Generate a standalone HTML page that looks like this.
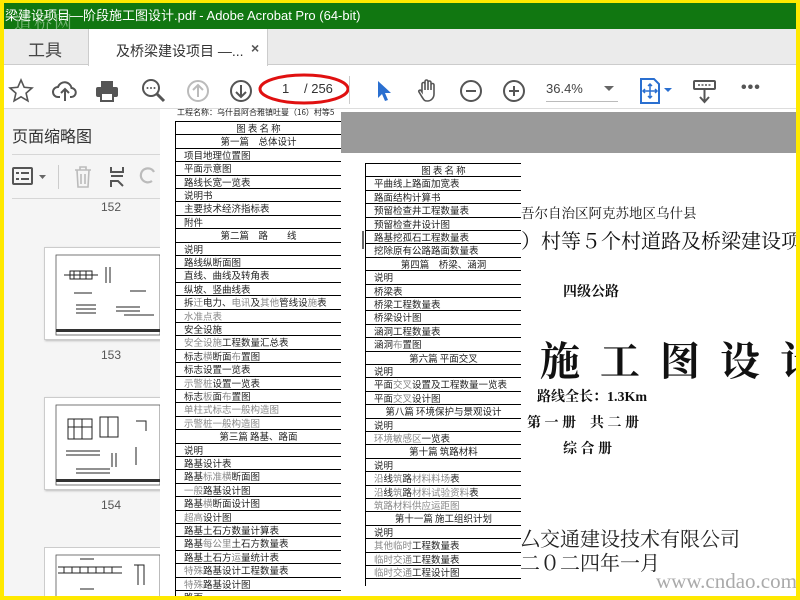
<!DOCTYPE html>
<html><head><meta charset="utf-8"><style>
*{margin:0;padding:0;box-sizing:border-box}
body{width:800px;height:600px;overflow:hidden;background:#ffe900;position:relative;font-family:"Liberation Sans","Noto Sans CJK SC",sans-serif}
.a{position:absolute}
.cj{font-family:"Liberation Serif","Noto Serif CJK SC",serif}
.row{position:absolute;left:0;right:0;height:13.4px;border-top:1px solid #000;font-size:9.5px;line-height:13px;padding-left:8px;color:#222;white-space:nowrap;font-family:"Noto Sans CJK SC",sans-serif}
.row.c{text-align:center;padding-left:0}
.g{color:#888}
svg{position:absolute}
</style></head><body>
<div class="a" style="left:4px;top:3px;width:792px;height:593px;background:#fff;overflow:hidden">
<div class="a" style="left:0;top:0;width:792px;height:26px;background:#117711;color:#fff;font-size:13px;line-height:26px;padding-left:1px;white-space:nowrap">梁建设项目—阶段施工图设计.pdf - Adobe Acrobat Pro (64-bit)</div>
<div class="a cj" style="left:10px;top:6px;font-size:18px;color:rgba(200,230,200,.55);letter-spacing:2px">道桥网</div>
<div class="a" style="left:0;top:26px;width:792px;height:36px;background:#ebebeb;border-bottom:1px solid #ccc"></div>
<div class="a" style="left:24px;top:33px;font-size:17px;color:#444">工具</div>
<div class="a" style="left:84px;top:26px;width:180px;height:37px;background:#fff;border-left:1px solid #ccc;border-right:1px solid #ccc"></div>
<div class="a" style="left:112px;top:38px;font-size:14px;color:#333">及桥梁建设项目 —...</div>
<div class="a" style="left:247px;top:37px;font-size:14px;color:#555;font-weight:bold">×</div>
<div class="a" style="left:0;top:63px;width:792px;height:42px;background:#fff"></div>
<svg style="left:4px;top:75px" width="26" height="26" viewBox="0 0 26 26"><path d="M13 2l3.2 7.3 7.8.7-5.9 5.2 1.8 7.7L13 18.8 6.1 22.9l1.8-7.7L2 10l7.8-.7z" fill="none" stroke="#555" stroke-width="1.6"/></svg>
<svg style="left:48px;top:75px" width="26" height="26" viewBox="0 0 26 26"><path d="M8 19H6a5 5 0 0 1 0-10 7 7 0 0 1 13.5 1A4.5 4.5 0 0 1 19 19h-1M13 23V11M9 15l4-4 4 4" fill="none" stroke="#555" stroke-width="2"/></svg>
<svg style="left:91px;top:76px" width="24" height="24" viewBox="0 0 24 24"><rect x="6" y="2" width="12" height="6" fill="#555"/><rect x="1" y="8" width="22" height="10" rx="2" fill="#555"/><rect x="6" y="14" width="12" height="8" fill="#fff" stroke="#555" stroke-width="2"/></svg>
<svg style="left:137px;top:75px" width="26" height="26" viewBox="0 0 26 26"><circle cx="10" cy="10" r="8" fill="none" stroke="#555" stroke-width="2"/><path d="M16 16l7 7" stroke="#555" stroke-width="3"/><circle cx="6.5" cy="10" r="1" fill="#555"/><circle cx="10" cy="10" r="1" fill="#555"/><circle cx="13.5" cy="10" r="1" fill="#555"/></svg>
<svg style="left:182px;top:76px" width="24" height="24" viewBox="0 0 24 24"><circle cx="12" cy="12" r="10" fill="none" stroke="#bbb" stroke-width="2"/><path d="M12 18V6M7 11l5-5 5 5" fill="none" stroke="#bbb" stroke-width="2"/></svg>
<svg style="left:225px;top:76px" width="24" height="24" viewBox="0 0 24 24"><circle cx="12" cy="12" r="10" fill="none" stroke="#555" stroke-width="2"/><path d="M12 6v12M7 13l5 5 5-5" fill="none" stroke="#555" stroke-width="2"/></svg>
<svg style="left:252px;top:68px" width="96" height="36" viewBox="0 0 96 36"><ellipse cx="48" cy="18" rx="44" ry="14" fill="none" stroke="#e01010" stroke-width="3"/></svg>
<div class="a" style="left:278px;top:78px;font-size:13px;color:#333">1</div>
<div class="a" style="left:300px;top:78px;font-size:13px;color:#333">/ 256</div>
<div class="a" style="left:345px;top:73px;width:1px;height:28px;background:#ccc"></div>
<svg style="left:372px;top:77px" width="16" height="22" viewBox="0 0 16 22"><path d="M2 1v17l4-4 3 7 3-1-3-7h6z" fill="#2a6fd0"/></svg>
<svg style="left:411px;top:75px" width="26" height="26" viewBox="0 0 26 26"><path d="M7 14V6a1.5 1.5 0 0 1 3 0v6V3.5a1.5 1.5 0 0 1 3 0V12V4.5a1.5 1.5 0 0 1 3 0V12V7a1.5 1.5 0 0 1 3 0v9c0 4-3 7-6.5 7S9 22 7 19l-3-5c-.8-1.4 1.2-2.6 2.2-1.2z" fill="none" stroke="#555" stroke-width="1.6"/></svg>
<svg style="left:455px;top:76px" width="24" height="24" viewBox="0 0 24 24"><circle cx="12" cy="12" r="10" fill="none" stroke="#555" stroke-width="2"/><path d="M7 12h10" stroke="#555" stroke-width="2"/></svg>
<svg style="left:498px;top:76px" width="24" height="24" viewBox="0 0 24 24"><circle cx="12" cy="12" r="10" fill="none" stroke="#555" stroke-width="2"/><path d="M7 12h10M12 7v10" stroke="#555" stroke-width="2"/></svg>
<div class="a" style="left:542px;top:78px;font-size:13px;color:#444">36.4%</div>
<div class="a" style="left:600px;top:83px;border:5px solid transparent;border-top:5px solid #666;border-bottom:0"></div>
<div class="a" style="left:542px;top:98px;width:72px;height:1px;background:#bbb"></div>
<svg style="left:635px;top:75px" width="36" height="26" viewBox="0 0 36 26"><path d="M2 1h13l5 5v19H2z" fill="none" stroke="#2a6fd0" stroke-width="2"/><path d="M11 6v14M4 13h14M9 8l2-2 2 2M9 18l2 2 2-2M6 11l-2 2 2 2M16 11l2 2-2 2" fill="none" stroke="#2a6fd0" stroke-width="1.5"/><path d="M25 10h8l-4 4z" fill="#2a6fd0"/></svg>
<svg style="left:688px;top:76px" width="26" height="26" viewBox="0 0 26 26"><rect x="2" y="2" width="21" height="8" rx="1" fill="none" stroke="#555" stroke-width="2"/><path d="M6 6h13" stroke="#555" stroke-dasharray="2 1.5" stroke-width="1.5"/><path d="M12.5 11v12M8 18l4.5 5 4.5-5" fill="none" stroke="#555" stroke-width="2"/></svg>
<div class="a" style="left:737px;top:76px;font-size:16px;color:#555;letter-spacing:1px;font-weight:bold">•••</div>
<div class="a" style="left:0;top:105px;width:792px;height:1px;background:#ddd"></div>

<div class="a" style="left:0;top:106px;width:156px;height:487px;background:#f5f5f5"></div>
<div class="a" style="left:8px;top:120px;font-size:16px;color:#333">页面缩略图</div>
<div class="a" style="left:8px;top:151px;width:148px;height:1px;background:#d6d6d6"></div>
<svg style="left:8px;top:163px" width="40" height="22" viewBox="0 0 40 22"><rect x="1" y="2" width="19" height="16" rx="1" fill="none" stroke="#555" stroke-width="2"/><path d="M4 7h3M9 7h8M4 13h3M9 13h8" stroke="#555" stroke-width="2"/><path d="M27 9h7l-3.5 4z" fill="#666"/></svg>
<div class="a" style="left:54px;top:162px;width:1px;height:24px;background:#ccc"></div>
<svg style="left:68px;top:162px" width="92" height="24" viewBox="0 0 92 24"><path d="M3 5h16M8 5V2h6v3M5 5l1 17h10l1-17M9 9v10M13 9v10" fill="none" stroke="#bbb" stroke-width="1.6"/><path d="M39 2v5h12V2M39 22v-6h7l5 5M39 11h12" fill="none" stroke="#555" stroke-width="2"/><path d="M80 16a7 7 0 1 1 2-9" fill="none" stroke="#bbb" stroke-width="2.2"/></svg>
<div class="a" style="left:8px;top:195px;width:148px;height:1px;background:#d6d6d6"></div>
<div class="a" style="left:97px;top:197px;font-size:12px;color:#555">152</div>
<div class="a" style="left:40px;top:244px;width:120px;height:93px;background:#fff;border:1px solid #ccc;box-shadow:1px 1px 2px #bbb"></div>
<svg style="left:50px;top:250px" width="106" height="84"><rect x="2" y="2" width="104" height="80" fill="none" stroke="#555" stroke-width=".8"/><g fill="none" stroke="#222" stroke-width="1"><rect x="16" y="18" width="22" height="8"/><path d="M20 18v8M26 18v8M32 18v8M10 22h34M52 14v16M56 14v16M20 40h18M22 52h20M22 56h20M22 60h20M62 54h24M62 58h24M76 38h16M70 62h30"/></g><rect x="2" y="76" width="104" height="3" fill="#333"/></svg>
<div class="a" style="left:97px;top:345px;font-size:12px;color:#555">153</div>
<div class="a" style="left:40px;top:394px;width:120px;height:93px;background:#fff;border:1px solid #ccc;box-shadow:1px 1px 2px #bbb"></div>
<svg style="left:50px;top:400px" width="106" height="84"><rect x="2" y="2" width="104" height="80" fill="none" stroke="#555" stroke-width=".8"/><g fill="none" stroke="#222" stroke-width="1"><rect x="14" y="16" width="24" height="20"/><path d="M20 16v20M28 16v20M14 24h24"/><rect x="46" y="14" width="18" height="20"/><path d="M54 14v20M82 18h10v10M12 48h34M12 52h34M58 50v14M62 50v14M22 66h34M22 70h34M82 44v18"/></g><rect x="2" y="76" width="104" height="3" fill="#333"/></svg>
<div class="a" style="left:97px;top:495px;font-size:12px;color:#555">154</div>
<div class="a" style="left:40px;top:544px;width:120px;height:60px;background:#fff;border:1px solid #ccc"></div>
<svg style="left:50px;top:550px" width="106" height="45"><rect x="2" y="2" width="104" height="50" fill="none" stroke="#555" stroke-width=".8"/><g fill="none" stroke="#222" stroke-width="1"><path d="M4 14h64M4 20h64M10 14v6M18 14v6M26 14v6M34 14v6M42 14v6M50 14v6M58 14v6M80 12h10v20M84 12v20M26 6h14M26 36h14"/></g></svg>

<div class="a" style="left:156px;top:106px;width:636px;height:487px;background:#fff"></div>
<div class="a" style="left:337px;top:109px;width:455px;height:41px;background:#9a9a9a"></div>
<div class="a" style="left:173px;top:104px;font-size:8px;color:#222;font-family:'Noto Sans CJK SC',sans-serif;white-space:nowrap;width:164px;overflow:hidden">工程名称：乌什县阿合雅镇吐曼（16）村等5</div>
<div class="a" style="left:171px;top:118px;width:166px;height:480px;border-left:1px solid #000;overflow:hidden">
<div class="row c" style="top:0">图 表 名 称</div>
<div class="row c" style="top:13.4px">第一篇　总体设计</div>
<div class="row" style="top:26.8px">项目地理位置图</div>
<div class="row" style="top:40.2px">平面示意图</div>
<div class="row" style="top:53.6px">路线长宽一览表</div>
<div class="row" style="top:67px">说明书</div>
<div class="row" style="top:80.4px">主要技术经济指标表</div>
<div class="row" style="top:93.8px">附件</div>
<div class="row c" style="top:107.2px">第二篇　路　　线</div>
<div class="row" style="top:120.6px">说明</div>
<div class="row" style="top:134px">路线纵断面图</div>
<div class="row" style="top:147.4px">直线、曲线及转角表</div>
<div class="row" style="top:160.8px">纵坡、竖曲线表</div>
<div class="row" style="top:174.2px">拆<span class="g">迁</span>电力、<span class="g">电讯</span>及<span class="g">其他</span>管线设<span class="g">施</span>表</div>
<div class="row g" style="top:187.6px">水准点表</div>
<div class="row" style="top:201px">安全设施</div>
<div class="row" style="top:214.4px"><span class="g">安全设施</span>工程数量汇总表</div>
<div class="row" style="top:227.8px">标志<span class="g">横</span>断面<span class="g">布</span>置图</div>
<div class="row" style="top:241.2px">标志设置一览表</div>
<div class="row" style="top:254.6px"><span class="g">示警桩</span>设置一览表</div>
<div class="row" style="top:268px">标志<span class="g">板</span>面<span class="g">布</span>置图</div>
<div class="row g" style="top:281.4px">单柱式标志一般构造图</div>
<div class="row g" style="top:294.8px">示警桩一般构造图</div>
<div class="row c" style="top:308.2px">第三篇 路基、路面</div>
<div class="row" style="top:321.6px">说明</div>
<div class="row" style="top:335px">路基设计表</div>
<div class="row" style="top:348.4px">路基<span class="g">标准横</span>断面图</div>
<div class="row" style="top:361.8px"><span class="g">一般</span>路基设计图</div>
<div class="row" style="top:375.2px">路基<span class="g">横</span>断面设计图</div>
<div class="row" style="top:388.6px"><span class="g">超高</span>设计图</div>
<div class="row" style="top:402px">路基土石方数量计算表</div>
<div class="row" style="top:415.4px">路基<span class="g">每公里</span>土石方数量表</div>
<div class="row" style="top:428.8px">路基土石方<span class="g">运</span>量统计表</div>
<div class="row" style="top:442.2px"><span class="g">特殊</span>路基设计工程数量表</div>
<div class="row" style="top:455.6px"><span class="g">特殊</span>路基设计图</div>
<div class="row" style="top:469px">路面…</div>
</div>
<div class="a" style="left:361px;top:160px;width:156px;height:423px;border-left:1px solid #000;overflow:hidden">
<div class="row c" style="top:0">图 表 名 称</div>
<div class="row" style="top:13.4px">平曲线上路面加宽表</div>
<div class="row" style="top:26.8px">路面结构计算书</div>
<div class="row" style="top:40.2px">预留检查井工程数量表</div>
<div class="row" style="top:53.6px">预留检查井设计图</div>
<div class="row" style="top:67px">路基挖孤石工程数量表</div>
<div class="row" style="top:80.4px">挖除原有公路路面数量表</div>
<div class="row c" style="top:93.8px">第四篇　桥梁、涵洞</div>
<div class="row" style="top:107.2px">说明</div>
<div class="row" style="top:120.6px">桥梁表</div>
<div class="row" style="top:134px">桥梁工程数量表</div>
<div class="row" style="top:147.4px">桥梁设计图</div>
<div class="row" style="top:160.8px">涵洞工程数量表</div>
<div class="row" style="top:174.2px">涵洞<span class="g">布</span>置图</div>
<div class="row c" style="top:187.6px">第六篇 平面交叉</div>
<div class="row" style="top:201px">说明</div>
<div class="row" style="top:214.4px">平面<span class="g">交叉</span>设置及工程数量一览表</div>
<div class="row" style="top:227.8px">平面<span class="g">交叉</span>设计图</div>
<div class="row c" style="top:241.2px">第八篇 环境保护与景观设计</div>
<div class="row" style="top:254.6px">说明</div>
<div class="row" style="top:268px"><span class="g">环境敏感区</span>一览表</div>
<div class="row c" style="top:281.4px">第十篇 筑路材料</div>
<div class="row" style="top:294.8px">说明</div>
<div class="row" style="top:308.2px"><span class="g">沿</span>线<span class="g">筑</span>路<span class="g">材料料场</span>表</div>
<div class="row" style="top:321.6px"><span class="g">沿</span>线<span class="g">筑</span>路<span class="g">材料试验资料</span>表</div>
<div class="row g" style="top:335px">筑路材料供应运距图</div>
<div class="row c" style="top:348.4px">第十一篇 施工组织计划</div>
<div class="row" style="top:361.8px">说明</div>
<div class="row" style="top:375.2px"><span class="g">其他临时</span>工程数量表</div>
<div class="row" style="top:388.6px"><span class="g">临时交通</span>工程数量表</div>
<div class="row" style="top:402px"><span class="g">临时交通</span>工程设计图</div>
<div class="row" style="top:415.4px;height:1px"></div>
</div>
<div class="cj a" style="left:517px;top:199px;font-size:13.5px;color:#111;white-space:nowrap">吾尔自治区阿克苏地区乌什县</div>
<div class="cj a" style="left:517px;top:222px;font-size:20px;color:#111;white-space:nowrap">）村等５个村道路及桥梁建设项</div>
<div class="a" style="left:358px;top:228px;width:2px;height:18px;background:#666"></div>
<div class="cj a" style="left:559px;top:278px;font-size:14px;font-weight:bold;color:#111">四级公路</div>
<div class="cj a" style="left:536px;top:327px;font-size:40px;font-weight:bold;color:#111;letter-spacing:20px;white-space:nowrap">施工图设计</div>
<div class="cj a" style="left:533px;top:383px;font-size:14px;font-weight:bold;color:#111">路线全长：1.3Km</div>
<div class="cj a" style="left:523px;top:409px;font-size:14px;font-weight:bold;color:#111;white-space:nowrap">第 一 册　共 二 册</div>
<div class="cj a" style="left:559px;top:435px;font-size:14px;font-weight:bold;color:#111">综 合 册</div>
<div class="cj a" style="left:516px;top:520px;font-size:20px;color:#222;white-space:nowrap">厶交通建设技术有限公司</div>
<div class="cj a" style="left:516px;top:544px;font-size:20px;color:#222;white-space:nowrap">二０二四年一月</div>
<div class="a" style="left:652px;top:566px;font-size:21px;color:#aaa;font-family:'Liberation Serif',serif">www.cndao.com</div>
</div>
</body></html>
